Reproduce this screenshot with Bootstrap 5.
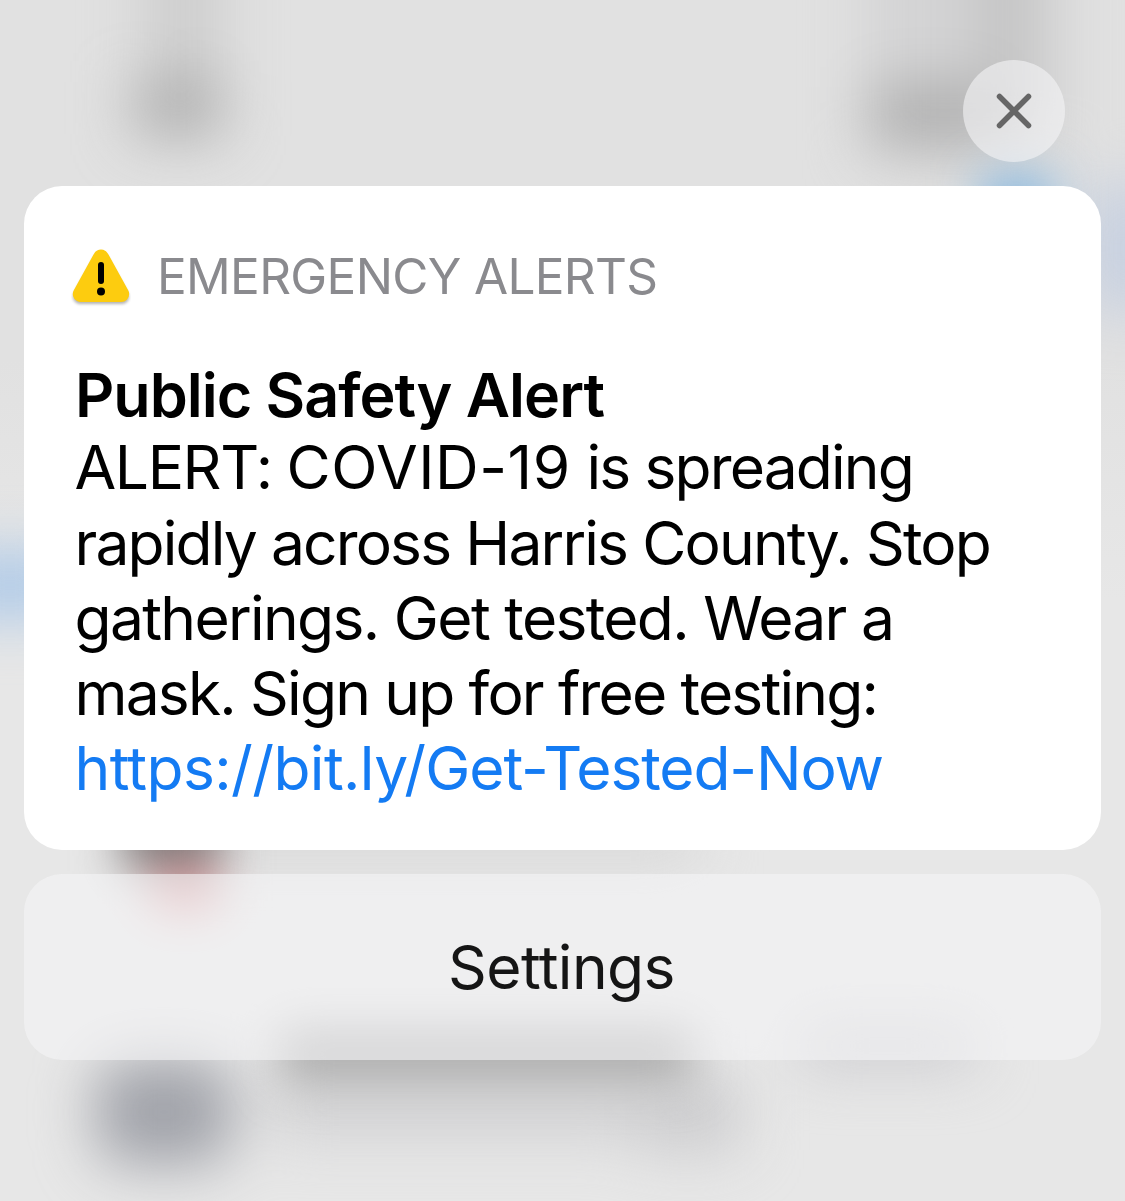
<!DOCTYPE html>
<html lang="en">
<head>
<meta charset="utf-8">
<meta name="viewport" content="width=device-width, initial-scale=1">
<title>Emergency Alert</title>
<link rel="stylesheet" href="https://cdn.jsdelivr.net/npm/bootstrap@5.3.0/dist/css/bootstrap.min.css">
<style>
  body { font-family: Inter, "Liberation Sans", sans-serif; background: #e4e4e4; color: #000; }
  .screen { height: 1201px; padding: 60px 24px 0; }
  .backdrop { z-index: -1; }
  .backdrop filter { color-interpolation-filters: sRGB; }
  .close-btn { width: 102px; height: 102px; margin-right: 36px; background: rgba(245,245,246,.6); }
  .alert-panel { margin-top: 24px; height: 664px; border-radius: 38px; padding: 62px 51px 0; }
  .source-row { height: 57px; gap: 26px; }
  .source { font-size: 49.5px; line-height: 57px; color: #8a8a8e; letter-spacing: -.68px; }
  .title-line { font-size: 61px; font-weight: 600; line-height: 72px; margin-top: 54px; letter-spacing: -1px; }
  .message { font-size: 60.5px; line-height: 75px; margin: -1px 0 0 -.5px; }
  .text-line { display: block; white-space: nowrap; }
  .message a { color: #147bf3; }
  .l1 { letter-spacing: -1.4px; line-height: 74px; margin-bottom: 1.5px; }
  .l1-name { letter-spacing: .55px; margin-left: -1px; }
  .l1-end { letter-spacing: -1.85px; margin-left: 0; }
  .l2 { letter-spacing: -1.87px; } .l3 { letter-spacing: -1.68px; }
  .l4 { letter-spacing: -1.83px; } .l5 { letter-spacing: -.62px; }
  .l5-end { letter-spacing: -1.15px; }
  .settings-btn { margin-top: 24px; height: 186px; border-radius: 38px; background: rgba(245,245,246,.6); font-size: 60.5px; color: #151515; letter-spacing: -.6px; padding-right: 14px; }
</style>
</head>
<body>
<svg class="backdrop position-fixed top-0 start-0" width="1125" height="1201" aria-hidden="true">
  <defs>
    <linearGradient id="base" x1="0" y1="0" x2="0" y2="1"><stop offset="0" stop-color="#e1e1e1"/><stop offset=".3" stop-color="#e1e1e1"/><stop offset=".5" stop-color="#e7e7e7"/><stop offset="1" stop-color="#e7e7e7"/></linearGradient>
    <filter id="b" x="-300" y="-300" width="1725" height="1801" filterUnits="userSpaceOnUse"><feGaussianBlur stdDeviation="29"/></filter>
    <filter id="s" x="-300" y="-300" width="1725" height="1801" filterUnits="userSpaceOnUse"><feGaussianBlur stdDeviation="23"/></filter>
  </defs>
  <rect width="1125" height="1201" fill="url(#base)"/>
  <g filter="url(#b)">
    <rect x="145" y="-200" width="76" height="290" fill="#cdcdcd"/>
    <rect x="134" y="80" width="88" height="56" fill="#acacac"/>
    <rect x="866" y="-200" width="195" height="360" fill="#d3d3d4"/>
    <rect x="985" y="-200" width="46" height="330" fill="#bfbfbf"/>
    <rect x="870" y="86" width="120" height="58" fill="#acacac"/>
    <rect x="1080" y="186" width="105" height="125" fill="#c8d1e0"/>
    <rect x="-60" y="555" width="140" height="60" fill="#a9c7e8"/>
    <rect x="96" y="1060" width="136" height="104" rx="30" fill="#a0a2a9"/>
    <rect x="270" y="1080" width="470" height="55" fill="#d0d0d2"/>
    <rect x="640" y="1085" width="100" height="65" fill="#cbcbcd"/>
    <rect x="800" y="1026" width="175" height="40" fill="#cacace"/>
    <rect x="200" y="815" width="500" height="44" fill="#d6d6d6"/>
  </g>
  <g filter="url(#s)">
    <rect x="980" y="176" width="74" height="50" fill="#84b6df"/>
    <rect x="280" y="1028" width="412" height="52" fill="#a8a8a8"/>
    <rect x="122" y="785" width="100" height="86" fill="#7f7b7b"/>
    <rect x="152" y="866" width="66" height="46" fill="#dc9da0"/>
  </g>
</svg>

<main class="screen d-flex flex-column">
  <button class="close-btn btn border-0 rounded-circle p-0 align-self-end d-flex align-items-center justify-content-center flex-shrink-0" aria-label="Close">
    <svg width="36" height="36" viewBox="0 0 36 36" fill="none" stroke="#666" stroke-width="5.500" stroke-linecap="round"><path d="M3.500 3.500 32.500 32.500M32.500 3.500 3.500 32.500"/></svg>
  </button>

  <section class="alert-panel bg-white flex-shrink-0">
    <div class="source-row d-flex align-items-center">
      <svg class="flex-shrink-0 overflow-visible" width="56" height="57" viewBox="0 0 56 57" aria-hidden="true">
        <defs><filter id="shade" x="-20%" y="-20%" width="140%" height="150%"><feGaussianBlur stdDeviation="1.500"/></filter></defs>
        <path d="M26 11.500 5 49H47Z" fill="#000" stroke="#000" stroke-width="14" stroke-linejoin="round" opacity=".3" filter="url(#shade)"/>
        <path d="M26 9.500 5.800 46H46.200Z" fill="#fdcc0f" stroke="#fdcc0f" stroke-width="16" stroke-linejoin="round"/>
        <path d="M26 17V33" stroke="#000" stroke-width="6" stroke-linecap="round"/><circle cx="26" cy="43.500" r="4" fill="#000"/>
      </svg>
      <span class="source text-nowrap">EMERGENCY ALERTS</span>
    </div>
    <h1 class="title-line text-nowrap mb-0">Public Safety Alert</h1>
    <p class="message">
      <span class="text-line l1">ALERT: <span class="l1-name">COVID-19</span> <span class="l1-end">is spreading</span></span>
      <span class="text-line l2">rapidly across Harris County. Stop</span>
      <span class="text-line l3">gatherings. Get tested. Wear a</span>
      <span class="text-line l4">mask. Sign up for free testing:</span>
      <a class="text-line l5 text-decoration-none" href="#">https://bit.ly/<span class="l5-end">Get-Tested-Now</span></a>
    </p>
  </section>

  <button class="settings-btn btn border-0 w-100 flex-shrink-0">Settings</button>
</main>
<script src="https://cdn.jsdelivr.net/npm/bootstrap@5.3.0/dist/js/bootstrap.bundle.min.js"></script>
</body>
</html>
